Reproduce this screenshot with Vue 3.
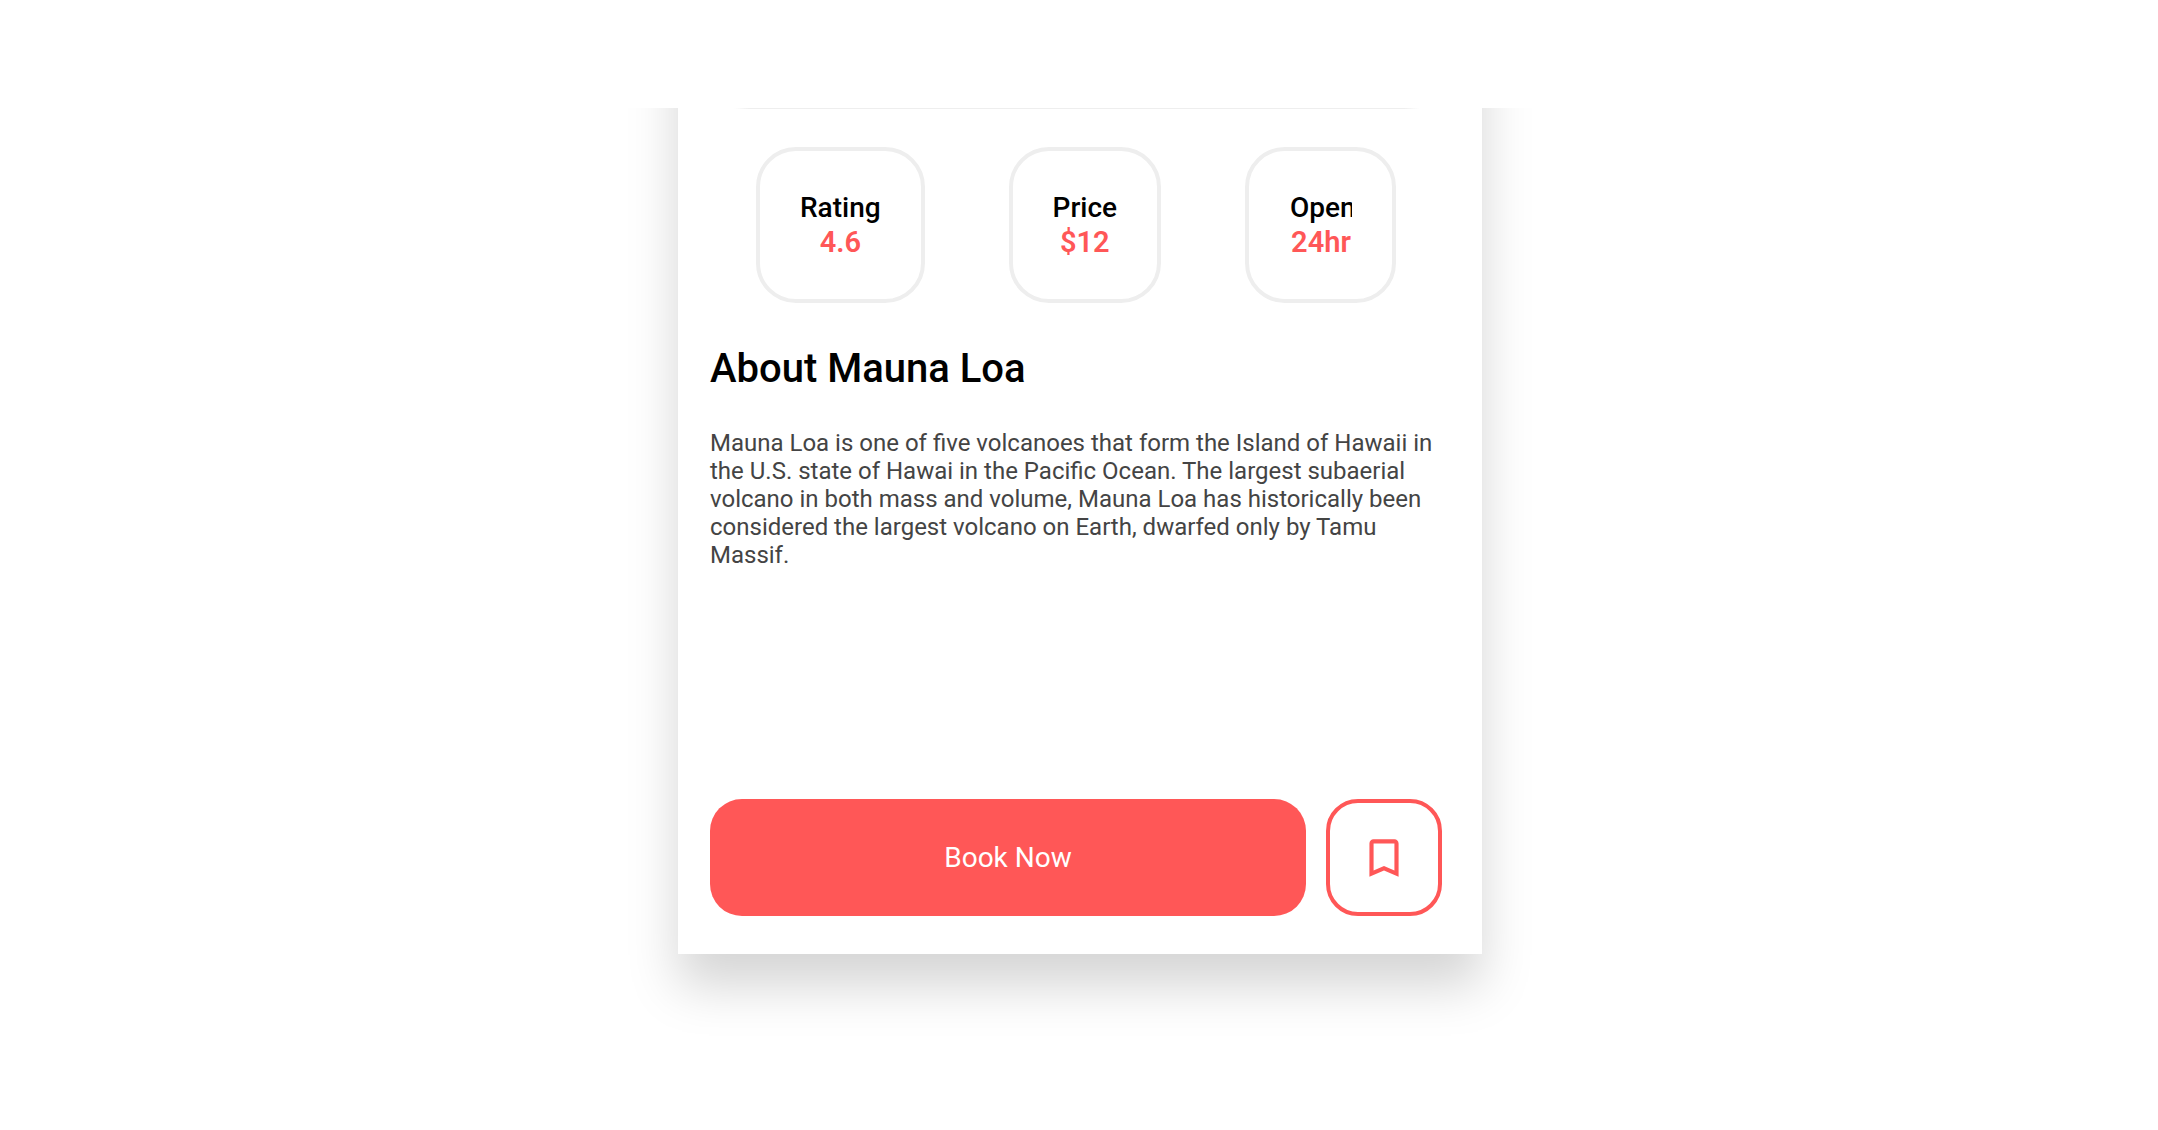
<script setup>
const facts = [
  { label: 'Rating', value: '4.6' },
  { label: 'Price', value: '$12' },
  { label: 'Open', value: '24hr', narrow: true },
]
</script>

<template>
  <main class="page">
    <article class="card">
      <hr class="divider" />
      <dl class="facts">
        <div v-for="fact in facts" :key="fact.label" class="fact">
          <div class="fact-text" :class="{ narrow: fact.narrow }">
            <dt>{{ fact.label }}</dt>
            <dd>{{ fact.value }}</dd>
          </div>
        </div>
      </dl>
      <section class="about">
        <h1>About Mauna Loa</h1>
        <p>
          Mauna Loa is one of five volcanoes that form the Island of Hawaii in the U.S. state of
          Hawai in the Pacific Ocean. The largest subaerial volcano in both mass and volume, Mauna
          Loa has historically been considered the largest volcano on Earth, dwarfed only by Tamu
          Massif.
        </p>
      </section>
      <footer class="actions">
        <button class="book" type="button">Book Now</button>
        <button class="save" type="button" aria-label="Save to bookmarks">
          <svg viewBox="0 0 24 24" aria-hidden="true">
            <path
              d="M17 3H7c-1.1 0-1.99.9-1.99 2L5 21l7-3 7 3V5c0-1.1-.9-2-2-2zm0 15l-5-2.18L7 18V5h10v13z"
            />
          </svg>
        </button>
      </footer>
    </article>
  </main>
</template>

<style>
body {
  margin: 0;
  background: #fff;
}
</style>

<style scoped>
.page {
  display: flex;
  justify-content: center;
  padding: 108px 24px 176px 26px;
  font-family: Roboto, sans-serif;
  color: #000;
}

.card {
  position: relative;
  isolation: isolate;
  box-sizing: border-box;
  width: 100%;
  max-width: 804px;
  padding: 0 40px 38px 32px;
  clip-path: inset(0 -100px -120px);
}

/* The sheet runs on above the visible part, so its side shadows stay even up to the cut */
.card::before {
  content: '';
  position: absolute;
  z-index: -1;
  inset: -120px 0 0;
  background: #fff;
  box-shadow: 0 32px 48px rgba(0, 0, 0, 0.17);
}

.divider {
  height: 1px;
  margin: 0 22px 38px 24px;
  border: 0;
  background: linear-gradient(to right, transparent, #eee 16px, #eee calc(100% - 16px), transparent);
}

.facts {
  display: flex;
  justify-content: space-between;
  margin: 0 46px;
}

.fact {
  box-sizing: border-box;
  display: flex;
  align-items: center;
  height: 156px;
  padding: 0 40px;
  border: 4px solid #eee;
  border-radius: 40px;
}

.fact-text {
  overflow: hidden;
  font-size: 28px;
  font-weight: 500;
  line-height: 34px;
  text-align: center;
}

.narrow {
  box-sizing: border-box;
  width: 63px;
  padding-left: 1px;
}

dt,
dd {
  margin: 0;
}

dd {
  font-size: 29px;
  font-weight: 600;
  color: #ff5757;
}

h1 {
  margin: 42px 0 0;
  font-size: 40px;
  font-weight: 500;
  line-height: 48px;
}

p {
  margin: 36px 0 0;
  font-size: 24px;
  line-height: 28px;
  color: #444;
}

.actions {
  display: flex;
  gap: 20px;
  margin-top: 230px;
}

button {
  box-sizing: border-box;
  height: 117px;
  padding: 0;
  border: 0;
  border-radius: 32px;
  font: 400 28px/34px Roboto, sans-serif;
  cursor: pointer;
}

.book {
  flex: 1;
  background: #ff5757;
  color: #fff;
}

.save {
  display: flex;
  align-items: center;
  justify-content: center;
  width: 116px;
  border: 4px solid #ff5757;
  background: #fff;
}

.save svg {
  width: 50px;
  height: 50px;
  fill: #ff5757;
}
</style>
